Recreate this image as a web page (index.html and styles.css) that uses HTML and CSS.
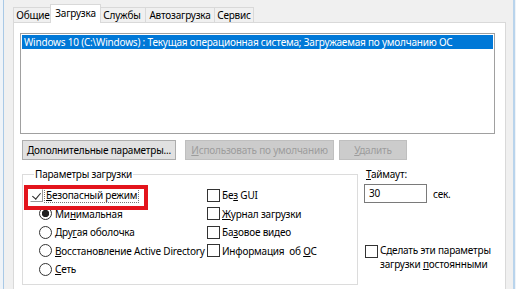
FILE: index.html
```html
<!DOCTYPE html>
<html lang="ru">
  <head>
    <meta charset="UTF-8" />
    <title>Конфигурация системы</title>
    <link rel="stylesheet" href="styles.css">
  </head>
  <body>
    <div class="window">
      <div class="edge-left"></div>
      <div class="dialog">
        <!-- Tab strip -->
        <div class="tabs">
          <div class="tab tab-1">Общие</div>
          <div class="tab tab-2 active">Загрузка</div>
          <div class="tab tab-3">Службы</div>
          <div class="tab tab-4">Автозагрузка</div>
          <div class="tab tab-5">Сервис</div>
        </div>

        <div class="page">
          <div class="os-list">
            <div class="os-item selected">Windows 10 (C:\Windows) : Текущая операционная система; Загружаемая по умолчанию ОС</div>
          </div>

          <div class="buttons">
            <button class="btn btn-advanced">Дополнительные параметры...</button>
            <button class="btn btn-default" disabled><u>И</u>спользовать по умолчанию</button>
            <button class="btn btn-delete" disabled><u>У</u>далить</button>
          </div>

          <div class="options">
            <fieldset class="group">
              <legend>Параметры загрузки</legend>
              <div class="cols">
                <div class="col col-left">
                  <div class="opt"><span class="check checked"></span><span class="focus"><u>Б</u>езопасный режим</span></div>
                  <div class="opt sub"><span class="radio on"></span><span>Ми<u>н</u>имальная</span></div>
                  <div class="opt sub"><span class="radio"></span><span>Дру<u>г</u>ая оболочка</span></div>
                  <div class="opt sub"><span class="radio"></span><span><u>В</u>осстановление Active Directory</span></div>
                  <div class="opt sub"><span class="radio"></span><span><u>С</u>еть</span></div>
                </div>
                <div class="col col-right">
                  <div class="opt"><span class="check"></span><span>Бе<u>з</u> GUI</span></div>
                  <div class="opt"><span class="check"></span><span><u>Ж</u>урнал загрузки</span></div>
                  <div class="opt"><span class="check"></span><span>Ба<u>з</u>овое видео</span></div>
                  <div class="opt"><span class="check"></span><span>Информация&nbsp; об <u>О</u>С</span></div>
                </div>
              </div>
              <!-- red annotation frame -->
              <div class="highlight"></div>
            </fieldset>

            <div class="timeout">
              <div class="timeout-label"><u>Т</u>аймаут:</div>
              <div class="timeout-row">
                <div class="field">30</div>
                <span>сек.</span>
              </div>
              <div class="opt permanent">
                <span class="check"></span>
                <span>Сделать эти параметры<br>загрузки <u>п</u>остоянными</span>
              </div>
            </div>
          </div>
        </div>
      </div>
      <div class="edge-right"></div>
    </div>
  </body>
</html>
```

FILE: styles.css
```css
/* Dialog background */
body {
  margin: 0;
  background-color: #f0f0f0;
  font-family: "Noto Sans", "Open Sans", sans-serif;
  font-size: 10px;
  letter-spacing: -0.2px;
  color: #000;
}

.window {
  display: flex;
  width: 516px;
  height: 289px;
  overflow: hidden;
}

/* Window frame on both sides */
.edge-left {
  width: 3px;
  background-color: #eef3f8;
  border-right: 1px solid #a9c9e6;
}

.edge-right {
  width: 1px;
  background-color: #eef3f8;
  border-left: 2px solid #b9d4ec;
}

.dialog {
  flex: 1;
  padding: 4px 7px 0 9px;
}

/* Tabs */
.tabs {
  display: flex;
  align-items: flex-end;
  height: 18px;
}

.tab {
  position: relative;
  box-sizing: border-box;
  height: 15px;
  line-height: 14px;
  text-align: center;
  white-space: nowrap;
  background-color: #f0f0f0;
  border: 1px solid #d9d9d9;
  border-bottom: none;
}

.tab-1 { width: 40px; }
.tab-2 { width: 51px; margin-left: -3px; }
.tab-3 { width: 48px; margin-left: -3px; }
.tab-4 { width: 70px; margin-left: -1px; }
.tab-5 { width: 40px; margin-left: -1px; }

.tab.active {
  z-index: 1;
  height: 19px;
  margin-bottom: -1px;
  padding-top: 1px;
  line-height: 15px;
  background-color: #fff;
}

/* Tab page */
.page {
  height: 300px;
  background-color: #fff;
  border: 1px solid #d9d9d9;
}

.os-list {
  height: 97px;
  margin: 10px 10px 0 6px;
  padding: 1px;
  border: 1px solid #a0a0a0;
}

.os-item {
  height: 14px;
  line-height: 14px;
  padding-left: 2px;
  white-space: nowrap;
}

.os-item.selected {
  background-color: #0078d7;
  color: #fff;
}

/* Button row */
.buttons {
  display: flex;
  margin: 6px 0 0 8px;
}

.btn {
  box-sizing: border-box;
  height: 20px;
  padding: 0;
  font-family: inherit;
  font-size: 10px;
  letter-spacing: -0.2px;
  background-color: #e1e1e1;
  border: 1px solid #adadad;
  color: #000;
}

.btn:disabled {
  background-color: #cccccc;
  border-color: #bfbfbf;
  color: #9c9c9c;
}

.btn-advanced { width: 154px; }
.btn-default { width: 149px; margin-left: 9px; }
.btn-delete { width: 68px; margin-left: 5px; }

/* Boot options */
.options {
  display: flex;
  margin: 8px 0 0 8px;
}

.group {
  position: relative;
  width: 336px;
  margin: 0;
  padding: 5px 0 4px 7px;
  border: 1px solid #dcdcdc;
  box-sizing: border-box;
  height: 117px;
}

.group legend {
  padding: 0 1px;
  margin-left: 4px;
  line-height: 13px;
}

.cols {
  display: flex;
}

.col-left {
  width: 177px;
}

.opt {
  display: flex;
  align-items: center;
  height: 18.5px;
  white-space: nowrap;
}

.opt.sub {
  padding-left: 9px;
}

.check {
  box-sizing: border-box;
  width: 13px;
  height: 13px;
  margin-right: 2px;
  border: 1px solid #333;
  background-color: #fff;
  flex-shrink: 0;
}

.check.checked {
  position: relative;
  border-color: #fff #999 #999 #fff;
}

.check.checked::after {
  content: "";
  position: absolute;
  left: 3px;
  top: 1px;
  width: 4px;
  height: 7px;
  border: solid #222;
  border-width: 0 1px 1px 0;
  transform: rotate(40deg);
}

.radio {
  box-sizing: border-box;
  width: 13px;
  height: 13px;
  margin-right: 3px;
  border: 1px solid #333;
  border-radius: 50%;
  background-color: #fff;
  flex-shrink: 0;
}

.radio.on {
  background: radial-gradient(circle, #222 3.4px, #fff 4px);
}

.focus {
  outline: 1px dotted #777;
  outline-offset: 0;
  padding: 0 1px;
}

/* Red annotation frame */
.highlight {
  position: absolute;
  left: 1px;
  top: 4px;
  width: 116px;
  height: 17px;
  border: 4px solid #e3141c;
}

/* Timeout column */
.timeout {
  margin-left: 6px;
}

.timeout-label {
  line-height: 13px;
  padding-left: 2px;
}

.timeout-row {
  display: flex;
  align-items: center;
  margin-top: 3px;
}

.field {
  box-sizing: border-box;
  width: 63px;
  height: 19px;
  line-height: 17px;
  padding-left: 4px;
  border: 1px solid #7a7a7a;
  background-color: #fff;
  margin-right: 6px;
}

.permanent {
  align-items: flex-start;
  height: auto;
  margin-top: 41px;
  line-height: 13.5px;
}

.permanent .check {
  margin: 1px 2px 0 1px;
}
```
